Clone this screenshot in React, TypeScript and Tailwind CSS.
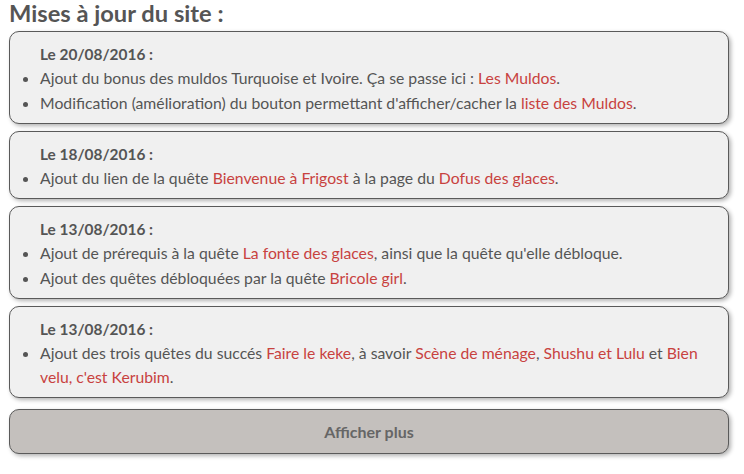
const link = "text-[#c8423f]";

type Part = string | { l: string };

const updates: { date: string; items: Part[][] }[] = [
    {
        date: "Le 20/08/2016 :",
        items: [
            ["Ajout du bonus des muldos Turquoise et Ivoire. Ça se passe ici : ", { l: "Les Muldos" }, "."],
            ["Modification (amélioration) du bouton permettant d'afficher/cacher la ", { l: "liste des Muldos" }, "."],
        ],
    },
    {
        date: "Le 18/08/2016 :",
        items: [["Ajout du lien de la quête ", { l: "Bienvenue à Frigost" }, " à la page du ", { l: "Dofus des glaces" }, "."]],
    },
    {
        date: "Le 13/08/2016 :",
        items: [
            ["Ajout de prérequis à la quête ", { l: "La fonte des glaces" }, ", ainsi que la quête qu'elle débloque."],
            ["Ajout des quêtes débloquées par la quête ", { l: "Bricole girl" }, "."],
        ],
    },
    {
        date: "Le 13/08/2016 :",
        items: [
            [
                "Ajout des trois quêtes du succés ",
                { l: "Faire le keke" },
                ", à savoir ",
                { l: "Scène de ménage" },
                ", ",
                { l: "Shushu et Lulu" },
                " et ",
                { l: "Bien velu, c'est Kerubim" },
                ".",
            ],
        ],
    },
];

export default function App() {
    return (
        <div className="min-h-[474px] bg-white pl-[9px] pr-[15px] text-[#555] [font-family:Lato,'Open_Sans',sans-serif]">
            <h1 className="text-[23.7px] leading-[26px] font-bold text-[#555]">Mises à jour du site :</h1>
            <div className="mt-[5px] flex flex-col gap-[7px]">
                {updates.map((u, i) => (
                    <div
                        key={i}
                        className="rounded-[10px] border border-[#5a5a5a] bg-[#f0f0f0] pt-[10px] pb-[8px] pr-4 shadow-[2px_2px_4px_rgba(0,0,0,0.3)]"
                    >
                        <p className="pl-[30px] text-[15.4px] leading-[24px] font-bold">{u.date}</p>
                        <ul className="list-disc pl-[30px] text-[15.75px] leading-[24px] marker:text-[#555]">
                            {u.items.map((parts, j) => (
                                <li key={j} className="[&:not(:first-child)]:mt-[1px]">
                                    {parts.map((p, k) =>
                                        typeof p === "string" ? (
                                            <span key={k}>{p}</span>
                                        ) : (
                                            <span key={k} className={link}>
                                                {p.l}
                                            </span>
                                        )
                                    )}
                                </li>
                            ))}
                        </ul>
                    </div>
                ))}
            </div>
            <button className="mt-[11px] h-[45px] w-full rounded-[10px] border border-[#5a5a5a] bg-[#c4c0bd] text-[16px] font-bold text-[#666] shadow-[2px_2px_4px_rgba(0,0,0,0.3)]">
                Afficher plus
            </button>
        </div>
    );
}
